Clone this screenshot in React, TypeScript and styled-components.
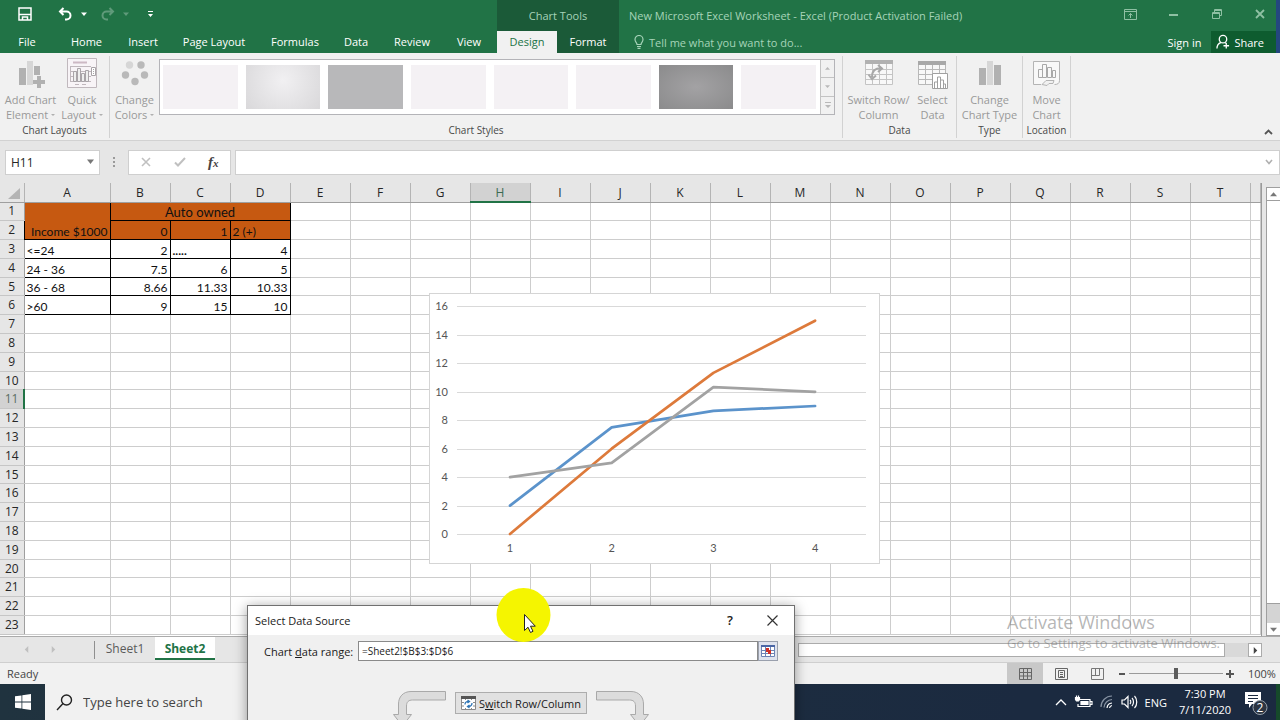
import React from "react";
import styled, { createGlobalStyle } from "styled-components";

const GlobalStyle = createGlobalStyle`
  * { box-sizing: border-box; }
  body { margin: 0; font-family: "Open Sans", "Noto Sans", sans-serif; font-size: 12px; color: #262626; }
  button { font: inherit; color: inherit; background: none; border: 0; padding: 0; }
  input { font: inherit; color: inherit; }
  svg { display: block; flex: none; }
`;

const Window = styled.div`
  position: relative;
  display: flex;
  flex-direction: column;
  height: 100vh;
  overflow: hidden;
  background: #e6e6e6;
`;

/* Title bar and tabs */
const TopRow = styled.header<{ $height: number }>`
  display: flex;
  align-items: stretch;
  flex: none;
  height: ${(p) => p.$height}px;
  background: #217346;
  border-right: 4px solid #24477f;
  color: #fff;
  font-size: 11px;
`;
const QuickAccess = styled.div`
  display: flex;
  align-items: center;
  width: 497px;
  padding: 0 0 3px 18px;
`;
const QuickButton = styled.button<{ $gap: number; $faded?: boolean }>`
  margin-right: ${(p) => p.$gap}px;
  opacity: ${(p) => (p.$faded ? 0.28 : 1)};
`;
const ToolsTitle = styled.div`
  width: 122px;
  line-height: 32px;
  text-align: center;
  background: #1b5a38;
  color: #a6d3b8;
`;
const DocTitle = styled.div`
  flex: 1;
  padding-left: 10px;
  line-height: 32px;
  color: #a6d3b8;
  white-space: nowrap;
`;
const WindowButtons = styled.div`
  display: flex;
  align-items: center;
  gap: 32px;
  padding: 0 11px 3px 0;
  color: #8fc0a3;
`;
const WindowButton = styled.button`
  display: flex;
  justify-content: center;
  width: 11px;
`;
const Tab = styled.button<{ $width: number; $kind?: "active" | "tool" }>`
  width: ${(p) => p.$width}px;
  line-height: 22px;
  white-space: nowrap;
  background: ${(p) => (p.$kind === "active" ? "#f1f1f1" : p.$kind === "tool" ? "#1b5a38" : "none")};
  color: ${(p) => (p.$kind === "active" ? "#217346" : "#fff")};
`;
const TellMe = styled.button`
  display: flex;
  align-items: center;
  gap: 5px;
  padding-left: 15px;
  color: #a6d3b8;
`;
const Spacer = styled.div`
  flex: 1;
`;
const AccountButton = styled.button<{ $dark?: boolean }>`
  display: flex;
  align-items: center;
  gap: 4px;
  padding: 0 ${(p) => (p.$dark ? 12 : 10)}px 0 ${(p) => (p.$dark ? 5 : 10)}px;
  white-space: nowrap;
  background: ${(p) => (p.$dark ? "#0e5c2f" : "none")};
`;

/* Ribbon */
const Ribbon = styled.section`
  display: flex;
  flex: none;
  height: 88px;
  padding: 3px 0 2px;
  background: #f1f1f1;
  border-bottom: 1px solid #d2d2d2;
`;
const Group = styled.div<{ $width: number }>`
  display: flex;
  flex-direction: column;
  flex: none;
  width: ${(p) => p.$width}px;
  border-right: 1px solid #d2d2d2;
`;
const GroupBody = styled.div<{ $start?: boolean }>`
  display: flex;
  justify-content: ${(p) => (p.$start ? "flex-start" : "center")};
  flex: 1;
`;
const GroupLabel = styled.div`
  line-height: 16px;
  text-align: center;
  font-size: 10px;
  color: #484848;
`;
const RibbonButton = styled.button<{ $width: number }>`
  display: flex;
  flex-direction: column;
  align-items: center;
  width: ${(p) => p.$width}px;
  padding-top: 1px;
  font-size: 11px;
  line-height: 15px;
  white-space: nowrap;
  color: #999;
  svg { margin-bottom: 3px; }
`;
const Gallery = styled.div`
  display: flex;
  width: 676px;
  height: 56px;
  margin: 3px 6px 0 0;
  background: #fff;
  border: 1px solid #b4b4b8;
`;
const Tiles = styled.div`
  display: flex;
  flex: 1;
  gap: 8px;
  padding: 5px 4px 5px 3px;
`;
const Tile = styled.button<{ $fill: string }>`
  flex: 1;
  background: ${(p) => p.$fill};
`;
const GalleryScroll = styled.div`
  display: flex;
  flex-direction: column;
  width: 14px;
  border-left: 1px solid #c3c3c3;
  background: #f1f1f1;
`;
const GalleryStep = styled.button`
  display: flex;
  align-items: center;
  justify-content: center;
  flex: 1;
  & + & { border-top: 1px solid #c3c3c3; }
`;
const Collapse = styled.button`
  align-self: flex-end;
  margin: 0 7px 3px auto;
`;

/* Formula bar */
const FormulaBar = styled.div`
  display: flex;
  align-items: center;
  flex: none;
  height: 42px;
  padding: 0 0 0 5px;
`;
const Box = styled.div<{ $width?: number; $gap?: number }>`
  display: flex;
  align-items: center;
  flex: ${(p) => (p.$width ? "none" : "1")};
  width: ${(p) => (p.$width ? p.$width + "px" : "auto")};
  height: 25px;
  margin-right: ${(p) => p.$gap ?? 0}px;
  background: #fff;
  border: 1px solid #cfcfcf;
`;
const BareInput = styled.input`
  flex: 1;
  min-width: 0;
  height: 100%;
  padding: 0 5px;
  border: 0;
  outline: 0;
  background: none;
`;
const Dots = styled.div`
  width: 28px;
  display: flex;
  justify-content: center;
`;
const FormulaButton = styled.button`
  display: flex;
  justify-content: center;
  width: 34px;
`;
const Fx = styled.span`
  font: italic bold 15px/20px "Liberation Serif", serif;
  color: #444;
  sub { font-size: 11px; line-height: 0; vertical-align: baseline; }
`;

/* Sheet */
const SheetArea = styled.main`
  position: relative;
  display: flex;
  flex: 1;
  min-height: 0;
`;
const TableFrame = styled.div`
  flex: 1;
  min-width: 0;
  height: 100%;
  padding-bottom: 1px;
  overflow: hidden;
  background: #fff;
  border-right: 1px solid #9a9a9a;
`;
const Grid = styled.table`
  width: 100%;
  height: 100%;
  table-layout: fixed;
  border-collapse: collapse;
  font-family: Lato, sans-serif;
  font-size: 12px;
  line-height: 15px;
  color: #111;
`;
const ColHead = styled.th<{ $on?: boolean }>`
  height: 19px;
  padding: 1px 0 0;
  font: 12px/15px "Open Sans", sans-serif;
  color: ${(p) => (p.$on ? "#3c6b52" : "#262626")};
  background: ${(p) => (p.$on ? "#d2d2d2" : "#e6e6e6")};
  border-right: 1px solid #b4b4b4;
  border-bottom: ${(p) => (p.$on ? "2px solid #217346" : "1px solid #9f9f9f")};
`;
const RowHead = styled.th<{ $on?: boolean }>`
  padding: 0;
  font: 12px/16px "Open Sans", sans-serif;
  color: ${(p) => (p.$on ? "#5b6d63" : "#262626")};
  background: ${(p) => (p.$on ? "#d2d2d2" : "#e6e6e6")};
  border-bottom: 1px solid #c6c6c6;
  border-right: ${(p) => (p.$on ? "2px solid #217346" : "1px solid #9f9f9f")};
`;
const Cell = styled.td`
  padding: 0;
  border: 1px solid #cdcdcd;
`;
const DataCell = styled.td<{ $align?: "left" | "right" | "center"; $head?: boolean }>`
  padding: 0 2px;
  font-size: ${(p) => (p.$align === "center" ? 13 : 12)}px;
  text-align: ${(p) => p.$align ?? "left"};
  vertical-align: bottom;
  white-space: nowrap;
  background: ${(p) => (p.$head ? "#c65911" : "#fff")};
  border: 1px solid #000;
`;
const ChartCard = styled.figure`
  position: absolute;
  left: 429px;
  top: 110px;
  margin: 0;
  background: #fff;
  border: 1px solid #d5d5d5;
`;
const VScroll = styled.div`
  display: flex;
  flex-direction: column;
  width: 14px;
  margin: 4px 0 0 4px;
  border: 1px solid #9f9f9f;
  border-right: 0;
  background: #d4d4d4;
`;
const VThumb = styled.div`
  flex: 1;
  margin-bottom: 19px;
  background: #fff;
  border-top: 1px solid #9f9f9f;
  border-bottom: 1px solid #9f9f9f;
`;
const ScrollButton = styled.button`
  display: flex;
  align-items: center;
  justify-content: center;
  height: 12px;
  background: #fff;
`;

/* Sheet tabs */
const SheetBar = styled.nav`
  display: flex;
  flex: none;
  height: 27px;
  padding-left: 23px;
  border-top: 1px solid #ababab;
  border-bottom: 1px solid #cfcfcf;
`;
const NavArrow = styled.button`
  display: flex;
  align-items: center;
  width: 27px;
`;
const SheetTab = styled.button<{ $active?: boolean }>`
  width: 60px;
  height: 23px;
  padding-top: 2px;
  font-size: 12px;
  font-weight: ${(p) => (p.$active ? 700 : 400)};
  color: ${(p) => (p.$active ? "#217346" : "#5a5a5a")};
  background: ${(p) => (p.$active ? "#fff" : "none")};
  border-bottom: 2px solid ${(p) => (p.$active ? "#217346" : "transparent")};
`;
const TabDivider = styled.div`
  width: 1px;
  height: 18px;
  margin: 4px 0 0 17px;
  background: #8f8f8f;
`;
const HScroll = styled.div`
  display: flex;
  align-items: stretch;
  width: 464px;
  height: 14px;
  margin: 6px 18px 0 auto;
  background: #d9d9d9;
`;
const HThumb = styled.div`
  width: 427px;
  margin-right: 23px;
  background: #fff;
  border: 1px solid #ababab;
`;
const HButton = styled.button`
  display: flex;
  align-items: center;
  justify-content: center;
  width: 14px;
  background: #fff;
  border: 1px solid #ababab;
`;

/* Status bar */
const StatusBar = styled.footer`
  display: flex;
  align-items: center;
  flex: none;
  height: 21px;
  padding: 0 5px 0 7px;
  font-size: 11px;
  color: #444;
  background: #f1f1f1;
`;
const ViewButton = styled.button<{ $on?: boolean }>`
  display: flex;
  align-items: center;
  justify-content: center;
  width: 36px;
  height: 21px;
  background: ${(p) => (p.$on ? "#c8c8c8" : "none")};
`;
const ZoomStep = styled.button`
  display: flex;
  justify-content: center;
  width: 14px;
`;
const ZoomSlider = styled.input`
  appearance: none;
  width: 94px;
  height: 12px;
  margin: 0;
  background: linear-gradient(#9a9a9a, #9a9a9a) center / 100% 1px no-repeat;
  &::-webkit-slider-thumb {
    appearance: none;
    width: 4px;
    height: 11px;
    background: #5c5c5c;
  }
`;
const ZoomValue = styled.button`
  margin-left: 11px;
  width: 27px;
  white-space: nowrap;
`;

/* Taskbar */
const Taskbar = styled.footer`
  display: flex;
  align-items: stretch;
  flex: none;
  height: 36px;
  color: #fff;
  background: linear-gradient(90deg, #20333f, #1b2a40 80%);
  border-right: 4px solid #164a2a;
`;
const Start = styled.button`
  display: flex;
  align-items: center;
  justify-content: center;
  width: 45px;
`;
const Search = styled.label`
  display: flex;
  align-items: center;
  width: 345px;
  padding-left: 11px;
  color: #333;
  background: #f1f1f1;
`;
const SearchInput = styled.input`
  flex: 1;
  min-width: 0;
  margin-left: 8px;
  border: 0;
  outline: 0;
  font-size: 13px;
  background: none;
  &::placeholder { color: #444; opacity: 1; }
`;
const Tray = styled.div`
  display: flex;
  align-items: center;
  margin-left: auto;
  padding-right: 8px;
  gap: 7px;
  font-size: 11px;
`;
const Clock = styled.time`
  width: 62px;
  text-align: center;
  line-height: 16px;
`;

/* Dialog */
const Dialog = styled.section`
  position: absolute;
  left: 247px;
  top: 605px;
  width: 548px;
  height: 160px;
  background: #f0f0f0;
  border: 1px solid #707070;
  box-shadow: 0 2px 12px rgba(0, 0, 0, 0.4);
  color: #1a1a1a;
  font-size: 11px;
`;
const DialogTitle = styled.header`
  display: flex;
  align-items: center;
  height: 29px;
  padding: 0 16px 1px 7px;
  background: #fff;
`;
const Help = styled.button`
  margin: 0 34px 0 auto;
  font-size: 13px;
  font-weight: 600;
`;
const RangeRow = styled.div`
  display: flex;
  align-items: center;
  margin: 6px 16px 0;
`;
const RangeLabel = styled.label`
  width: 94px;
  white-space: nowrap;
`;
const RangeInput = styled.input`
  flex: 1;
  min-width: 0;
  height: 20px;
  padding: 0 3px;
  border: 1px solid #8a8a8a;
  background: #fff;
  outline: 0;
  font-size: 10px;
`;
const RangePick = styled.button`
  display: flex;
  align-items: center;
  justify-content: center;
  width: 20px;
  height: 20px;
  background: #dfe3ee;
  border: 1px solid #9aa0ad;
`;
const SwitchRow = styled.div`
  display: flex;
  align-items: flex-start;
  justify-content: center;
  gap: 9px;
  margin-top: 30px;
`;
const SwitchButton = styled.button`
  display: flex;
  align-items: center;
  justify-content: center;
  gap: 3px;
  width: 132px;
  height: 22px;
  margin-top: 1px;
  white-space: nowrap;
  background: #e1e1e1;
  border: 1px solid #adadad;
`;

/* Overlays */
const Watermark = styled.div`
  position: absolute;
  left: 1007px;
  top: 610px;
  font-size: 13px;
  line-height: 18px;
  white-space: nowrap;
  color: rgba(120, 120, 120, 0.55);
  pointer-events: none;
`;
const WatermarkTitle = styled.div`
  font-size: 18px;
  line-height: 24px;
`;
const Pointer = styled.div`
  position: absolute;
  left: 496px;
  top: 588px;
  pointer-events: none;
`;

const Triangle = ({ dir = "down", color = "#777", size = 7 }: { dir?: string; color?: string; size?: number }) => {
  const d: Record<string, string> = {
    down: "M0 2h8L4 6.500z",
    up: "M0 6h8L4 1.500z",
    left: "M6 0v8L2 4z",
    right: "M2 0v8L6 4z",
  };
  return (
    <svg width={size} height={size} viewBox="0 0 8 8" fill={color}>
      <path d={d[dir]} />
    </svg>
  );
};

const Caret = styled.i`
  display: inline-block;
  margin: 0 0 2px 3px;
  border: 2px solid transparent;
  border-top-color: #b0b0b0;
  border-bottom: 0;
  vertical-align: middle;
`;

const AddElementIcon = () => (
  <svg width="30" height="32" viewBox="0 0 30 32">
    <path fill="#b1b1b1" d="M3 11h7v17H3z" />
    <path fill="#d6d6d6" d="M11 4h6v24h-6z" />
    <path fill="#b1b1b1" d="M18 9h6v9h-6zM21 19h4v4h4v4h-4v4h-4v-4h-4v-4h4z" />
  </svg>
);
const QuickLayoutIcon = () => (
  <svg width="30" height="32" viewBox="0 0 30 32" fill="none" stroke="#c0b8bd">
    <path fill="#f8f4f7" d="M.5 1.500h29v29H.5z" />
    <path stroke="#cdb9c4" strokeWidth="2" d="M6 5.500h14" />
    <path d="M3 9.500h21M3 14.500h21M3 19.500h21M3 24.500h21M3.500 9v16" />
    <path stroke="#a9a4a8" fill="#eee" d="M6.500 14.500h3v10h-3zM10.500 11.500h3v13h-3zM14.500 16.500h3v8h-3zM18.500 13.500h3v11h-3z" />
    <path stroke="#a9a4a8" fill="#fff" d="M24.500 10.500h4v8h-4z" />
    <path stroke="#a9a4a8" d="M26.500 12v1M26.500 14v1M26.500 16v1" />
    <path d="M8 27.500h4M15 27.500h4" />
  </svg>
);
const ColorsIcon = () => (
  <svg width="28" height="32" viewBox="0 0 28 32" fill="#b9b9b9">
    <circle cx="8.500" cy="8" r="3.700" fill="#d6d6d6" />
    <circle cx="20" cy="8" r="3.700" />
    <circle cx="4.500" cy="18" r="3.700" />
    <circle cx="23.500" cy="18" r="3.700" />
    <circle cx="14" cy="24.500" r="3.700" />
  </svg>
);
const SwitchIcon = () => (
  <svg width="28" height="32" viewBox="0 0 28 32" fill="none" stroke="#c4c4c4">
    <path fill="#f8f8f8" d="M.5 3.500h27v24H.5z" />
    <path d="M0 12.500h28M0 17.500h28M0 22.500h28M7.500 7v20M14.500 7v20M21.500 7v20" />
    <path fill="#b1b1b1" stroke="none" d="M0 3h28v4H0z" />
    <path stroke="#a8a8a8" strokeWidth="2" d="M7 20c0-7 4-9 9-9M13 8l4 3.500-4 3.500M3.500 17.500L7 22l4-3.500" />
  </svg>
);
const SelectDataIcon = () => (
  <svg width="30" height="32" viewBox="0 0 30 32" fill="none" stroke="#b8b8b8">
    <path fill="#f8f8f8" d="M.5 4.500h27v23H.5z" />
    <path d="M0 12.500h28M0 17.500h28M0 22.500h28M7.500 8v20M14.500 8v20M21.500 8v20" />
    <path fill="#a8a8a8" stroke="none" d="M0 4h28v4H0z" />
    <path fill="#fff" stroke="#a0a0a0" d="M14.500 16.500h15v15h-15z" />
    <path stroke="#a0a0a0" d="M16.500 31v-6h3v6M19.500 31V20h3v11M22.500 31v-8h3v8M25.500 31v-4h2v4" />
  </svg>
);
const ChartTypeIcon = () => (
  <svg width="24" height="32" viewBox="0 0 24 32" fill="#b1b1b1">
    <path d="M1 11h7v17H1zM16 8h7v20h-7z" />
    <path fill="#d6d6d6" d="M9 4h6v24H9z" />
  </svg>
);
const MoveChartIcon = () => (
  <svg width="28" height="32" viewBox="0 0 28 32" fill="none" stroke="#b4b4b4">
    <path d="M8 27.500H.5v-23h26v19c0 3-2 4-5 4" fill="#f8f8f8" />
    <path stroke="#a8a8a8" d="M5.500 12.500h4v8h-4zM9.500 7.500h4v13h-4zM14.500 10.500h4v10h-4zM19.500 13.500h3v7h-3z" />
    <path fill="#f1f1f1" d="M9 27.500l4-4h8l-1 3h-4l-2 2z" />
  </svg>
);

const tileFills = [
  "#f4f1f4",
  "radial-gradient(circle at 50% 35%, #f1f0f2, #d9d8da)",
  "#b8b8ba",
  "#f4f1f4",
  "#f4f1f4",
  "#f4f1f4",
  "radial-gradient(#a3a2a4, #8b8b8c)",
  "#f4f1f4",
];

const tabs: [string, number, ("active" | "tool")?][] = [
  ["File", 54],
  ["Home", 65],
  ["Insert", 48],
  ["Page Layout", 94],
  ["Formulas", 68],
  ["Data", 54],
  ["Review", 58],
  ["View", 56],
  ["Design", 60, "active"],
  ["Format", 62, "tool"],
];

const columns = "ABCDEFGHIJKLMNOPQRST".split("");
const records = [
  ["<=24", "2", ".....", "4"],
  ["24 - 36", "7.5", "6", "5"],
  ["36 - 68", "8.66", "11.33", "10.33"],
  [">60", "9", "15", "10"],
];

const Blank = ({ count }: { count: number }) => (
  <>
    {Array.from({ length: count }, (_, i) => (
      <Cell key={i} />
    ))}
  </>
);

const Sheet = () => (
  <Grid>
    <colgroup>
      <col style={{ width: 24 }} />
      <col style={{ width: 86 }} />
      {columns.slice(1).map((c) => (
        <col key={c} style={{ width: 60 }} />
      ))}
      <col />
    </colgroup>
    <thead>
      <tr>
        <ColHead aria-label="Select all">
          <svg width="22" height="14" viewBox="0 0 22 14">
            <path d="M20 2v11H8z" fill="#b4b4b4" />
          </svg>
        </ColHead>
        {columns.map((c) => (
          <ColHead key={c} $on={c === "H"}>
            {c}
          </ColHead>
        ))}
        <ColHead />
      </tr>
    </thead>
    <tbody>
      <tr>
        <RowHead>1</RowHead>
        <DataCell rowSpan={2} $head $align="right">
          Income $1000
        </DataCell>
        <DataCell colSpan={3} $head $align="center">
          Auto owned
        </DataCell>
        <Blank count={17} />
      </tr>
      <tr>
        <RowHead>2</RowHead>
        <DataCell $head $align="right">0</DataCell>
        <DataCell $head $align="right">1</DataCell>
        <DataCell $head>2 (+)</DataCell>
        <Blank count={17} />
      </tr>
      {records.map((r, i) => (
        <tr key={r[0]}>
          <RowHead>{i + 3}</RowHead>
          {r.map((v, j) => (
            <DataCell key={j} $align={j === 0 || v === "....." ? "left" : "right"}>
              {v === "....." ? <b>{v}</b> : v}
            </DataCell>
          ))}
          <Blank count={17} />
        </tr>
      ))}
      {Array.from({ length: 17 }, (_, i) => i + 7).map((n) => (
        <tr key={n}>
          <RowHead $on={n === 11}>{n}</RowHead>
          <Blank count={21} />
        </tr>
      ))}
    </tbody>
  </Grid>
);

const series = [
  { color: "#5b93cb", values: [2, 7.5, 8.66, 9] },
  { color: "#dd7a3b", values: [0, 6, 11.33, 15] },
  { color: "#a2a2a2", values: [4, 5, 10.33, 10] },
];
const xAt = (i: number) => 80 + i * 101.7;
const yAt = (v: number) => 240 - v * 14.22;

const LineChart = () => (
  <svg width="449" height="269" viewBox="0 0 449 269" fontFamily="Lato, sans-serif" fontSize="11" fill="#555">
    {[0, 2, 4, 6, 8, 10, 12, 14, 16].map((v) => (
      <g key={v}>
        <path d={`M27 ${Math.round(yAt(v)) + 0.5}H436`} stroke="#d9d9d9" />
        <text x="18" y={yAt(v) + 4} textAnchor="end">
          {v}
        </text>
      </g>
    ))}
    {[1, 2, 3, 4].map((n, i) => (
      <text key={n} x={xAt(i)} y="258" textAnchor="middle">
        {n}
      </text>
    ))}
    {series.map((s) => (
      <polyline
        key={s.color}
        points={s.values.map((v, i) => `${xAt(i)},${yAt(v)}`).join(" ")}
        fill="none"
        stroke={s.color}
        strokeWidth="2.700"
        strokeLinecap="round"
        strokeLinejoin="round"
      />
    ))}
  </svg>
);

const SwapArrow = ({ flip }: { flip?: boolean }) => (
  <svg width="53" height="36" viewBox="0 0 53 36">
    <path
      transform={flip ? "translate(53 0) scale(-1 1)" : undefined}
      d="M52.500.5H18C10 .5 5.500 6 5.500 13v10.500H.5L9.500 35l9-11.500h-5V15c0-4 2-6 6-6h33z"
      fill="#dcdcdc"
      stroke="#a9a9a9"
    />
  </svg>
);

export default function App() {
  return (
    <Window>
      <GlobalStyle />
      <TopRow $height={31}>
        <QuickAccess>
          <QuickButton $gap={26} aria-label="Save">
            <svg width="14" height="14" viewBox="0 0 14 14" fill="none" stroke="#fff" strokeWidth="1.500">
              <path d="M1 1h12v12H1zM1 7.500h12" />
              <path d="M4.500 13v-3h5v3" />
            </svg>
          </QuickButton>
          <QuickButton $gap={8} aria-label="Undo">
            <svg width="15" height="14" viewBox="0 0 15 14" fill="none" stroke="#fff" strokeWidth="2">
              <path d="M5.500 1L2 4.500 5.500 8M2 4.500h6.500a4 4 0 0 1 0 8H7" />
            </svg>
          </QuickButton>
          <QuickButton $gap={13} aria-label="Undo options">
            <Triangle size={6} color="#fff" />
          </QuickButton>
          <QuickButton $gap={8} $faded aria-label="Redo">
            <svg width="15" height="14" viewBox="0 0 15 14" fill="none" stroke="#fff" strokeWidth="2">
              <path d="M9.500 1L13 4.500 9.500 8M13 4.500H6.500a4 4 0 0 0 0 8H8" />
            </svg>
          </QuickButton>
          <QuickButton $gap={18} $faded aria-label="Redo options">
            <Triangle size={6} color="#fff" />
          </QuickButton>
          <QuickButton $gap={0} aria-label="Customize toolbar">
            <svg width="7" height="8" viewBox="0 0 7 8" fill="#fff">
              <path d="M1 1h5v1H1zM1 4h5L3.500 7z" />
            </svg>
          </QuickButton>
        </QuickAccess>
        <ToolsTitle>Chart Tools</ToolsTitle>
        <DocTitle>New Microsoft Excel Worksheet - Excel (Product Activation Failed)</DocTitle>
        <WindowButtons>
          <WindowButton aria-label="Ribbon display options">
            <svg width="13" height="11" viewBox="0 0 13 11" fill="none" stroke="currentColor">
              <path d="M.5.5h12v10H.5zM.5 2.500h12M6.500 9V4.500M4.500 6.500l2-2 2 2" />
            </svg>
          </WindowButton>
          <WindowButton aria-label="Minimize">
            <svg width="9" height="10" viewBox="0 0 9 10" fill="currentColor">
              <path d="M0 5h9v2H0z" />
            </svg>
          </WindowButton>
          <WindowButton aria-label="Restore">
            <svg width="10" height="10" viewBox="0 0 10 10" fill="none" stroke="currentColor">
              <path d="M.5 3.500h7v6h-7zM.5 4.500h7M2.500 3V.5h7v6H8M2.500 1.500h7" />
            </svg>
          </WindowButton>
          <WindowButton aria-label="Close">
            <svg width="10" height="10" viewBox="0 0 10 10" stroke="currentColor" strokeWidth="1.800">
              <path d="M1 1l8 8M9 1L1 9" />
            </svg>
          </WindowButton>
        </WindowButtons>
      </TopRow>
      <TopRow $height={22}>
        {tabs.map(([name, width, kind]) => (
          <Tab key={name} $width={width} $kind={kind}>
            {name}
          </Tab>
        ))}
        <TellMe>
          <svg width="10" height="14" viewBox="0 0 10 14" fill="none" stroke="currentColor" strokeWidth="1.200">
            <path d="M3 9.500C3 7.500 1 7 1 4.500a4 4 0 0 1 8 0C9 7 7 7.500 7 9.500zM3 11.500h4M3.500 13.300h3" />
          </svg>
          Tell me what you want to do...
        </TellMe>
        <Spacer />
        <AccountButton>Sign in</AccountButton>
        <AccountButton $dark>
          <svg width="14" height="16" viewBox="0 0 15 16" fill="none" stroke="#fff" strokeWidth="1.400">
            <circle cx="7.500" cy="5" r="4" />
            <path d="M1 15c0-4 2-5.500 4.500-6.500M9.500 8.500l1.500 1M11 9v6M8 12h6" />
          </svg>
          Share
        </AccountButton>
      </TopRow>

      <Ribbon>
        <Group $width={110}>
          <GroupBody $start>
            <RibbonButton $width={61}>
              <AddElementIcon />
              Add Chart
              <span>Element<Caret /></span>
            </RibbonButton>
            <RibbonButton $width={42}>
              <QuickLayoutIcon />
              Quick
              <span>Layout<Caret /></span>
            </RibbonButton>
          </GroupBody>
          <GroupLabel>Chart Layouts</GroupLabel>
        </Group>
        <Group $width={733}>
          <GroupBody $start>
            <RibbonButton $width={49}>
              <ColorsIcon />
              Change
              <span>Colors<Caret /></span>
            </RibbonButton>
            <Gallery>
              <Tiles>
                {tileFills.map((fill, i) => (
                  <Tile key={i} $fill={fill} aria-label={`Style ${i + 1}`} />
                ))}
              </Tiles>
              <GalleryScroll>
                <GalleryStep aria-label="Previous styles">
                  <Triangle size={5} dir="up" color="#b8b8b8" />
                </GalleryStep>
                <GalleryStep aria-label="Next styles">
                  <Triangle size={5} color="#b8b8b8" />
                </GalleryStep>
                <GalleryStep aria-label="More styles">
                  <svg width="6" height="6" viewBox="0 0 6 6" fill="#b8b8b8">
                    <path d="M0 0h6v1H0zM0 3h6L3 6z" />
                  </svg>
                </GalleryStep>
              </GalleryScroll>
            </Gallery>
          </GroupBody>
          <GroupLabel>Chart Styles</GroupLabel>
        </Group>
        <Group $width={114}>
          <GroupBody>
            <RibbonButton $width={66}>
              <SwitchIcon />
              Switch Row/
              <span>Column</span>
            </RibbonButton>
            <RibbonButton $width={42}>
              <SelectDataIcon />
              Select
              <span>Data</span>
            </RibbonButton>
          </GroupBody>
          <GroupLabel>Data</GroupLabel>
        </Group>
        <Group $width={66}>
          <GroupBody>
            <RibbonButton $width={60}>
              <ChartTypeIcon />
              Change
              <span>Chart Type</span>
            </RibbonButton>
          </GroupBody>
          <GroupLabel>Type</GroupLabel>
        </Group>
        <Group $width={48}>
          <GroupBody>
            <RibbonButton $width={44}>
              <MoveChartIcon />
              Move
              <span>Chart</span>
            </RibbonButton>
          </GroupBody>
          <GroupLabel>Location</GroupLabel>
        </Group>
        <Collapse aria-label="Collapse the ribbon">
          <svg width="9" height="6" viewBox="0 0 9 6" fill="none" stroke="#555" strokeWidth="1.800">
            <path d="M1 5l3.500-3.500L8 5" />
          </svg>
        </Collapse>
      </Ribbon>

      <FormulaBar>
        <Box $width={95}>
          <BareInput aria-label="Name box" defaultValue="H11" />
          <svg width="15" height="8" viewBox="0 0 15 8" fill="#777">
            <path d="M3 1.500h7L6.500 6z" />
          </svg>
        </Box>
        <Dots>
          <svg width="2" height="10" viewBox="0 0 2 10" fill="#9a9a9a">
            <path d="M0 0h2v2H0zM0 4h2v2H0zM0 8h2v2H0z" />
          </svg>
        </Dots>
        <Box $width={103} $gap={4}>
          <FormulaButton aria-label="Cancel">
            <svg width="10" height="10" viewBox="0 0 10 10" stroke="#c0c0c0" strokeWidth="1.600">
              <path d="M1 1l8 8M9 1L1 9" />
            </svg>
          </FormulaButton>
          <FormulaButton aria-label="Enter">
            <svg width="12" height="10" viewBox="0 0 12 10" fill="none" stroke="#c0c0c0" strokeWidth="2">
              <path d="M1 5.500L4 8.500 11 1" />
            </svg>
          </FormulaButton>
          <FormulaButton aria-label="Insert function">
            <Fx>
              f<sub>x</sub>
            </Fx>
          </FormulaButton>
        </Box>
        <Box>
          <BareInput aria-label="Formula" />
          <svg width="14" height="6" viewBox="0 0 14 6" fill="none" stroke="#b0b0b0" strokeWidth="1.600">
            <path d="M1 1l3 3.500L7 1" />
          </svg>
        </Box>
      </FormulaBar>

      <SheetArea>
        <TableFrame>
          <Sheet />
        </TableFrame>
        <VScroll>
          <ScrollButton aria-label="Scroll up">
            <Triangle dir="up" />
          </ScrollButton>
          <VThumb />
          <ScrollButton aria-label="Scroll down">
            <Triangle />
          </ScrollButton>
        </VScroll>
        <ChartCard aria-label="Line chart">
          <LineChart />
        </ChartCard>
      </SheetArea>

      <SheetBar>
        <NavArrow aria-label="Previous sheet">
          <Triangle dir="left" color="#c0c0c0" />
        </NavArrow>
        <NavArrow aria-label="Next sheet">
          <Triangle dir="right" color="#c0c0c0" />
        </NavArrow>
        <TabDivider />
        <SheetTab>Sheet1</SheetTab>
        <SheetTab $active>Sheet2</SheetTab>
        <HScroll>
          <HThumb />
          <HButton aria-label="Scroll right">
            <Triangle dir="right" color="#444" />
          </HButton>
        </HScroll>
      </SheetBar>

      <StatusBar>
        Ready
        <Spacer />
        <ViewButton $on aria-label="Normal view">
          <svg width="13" height="12" viewBox="0 0 13 12" fill="none" stroke="#666">
            <path d="M.5.5h12v11H.5zM.5 4.500h12M.5 8h12M4.500.5v11M8.500.5v11" />
          </svg>
        </ViewButton>
        <ViewButton aria-label="Page layout view">
          <svg width="13" height="12" viewBox="0 0 13 12" fill="none" stroke="#666">
            <path d="M.5.5h12v11H.5zM3.500 2.500h6v7h-6zM5 4.500h3M5 6.500h3M5 8.500h3" />
          </svg>
        </ViewButton>
        <ViewButton aria-label="Page break view">
          <svg width="13" height="12" viewBox="0 0 13 12" fill="none" stroke="#777">
            <path d="M.5.5h12v11H.5zM.5 7.500h8V.5M4.500.5v7" />
          </svg>
        </ViewButton>
        <ZoomStep aria-label="Zoom out">
          <svg width="8" height="8" viewBox="0 0 8 8" fill="#555">
            <path d="M1 3h6v2H1z" />
          </svg>
        </ZoomStep>
        <ZoomSlider type="range" aria-label="Zoom" defaultValue={50} />
        <ZoomStep aria-label="Zoom in">
          <svg width="8" height="8" viewBox="0 0 8 8" fill="#555">
            <path d="M0 3h3V0h2v3h3v2H5v3H3V5H0z" />
          </svg>
        </ZoomStep>
        <ZoomValue>100%</ZoomValue>
      </StatusBar>

      <Taskbar>
        <Start aria-label="Start">
          <svg width="16" height="16" viewBox="0 0 16 16" fill="#fff">
            <path d="M0 2.300l6.500-.9v6.100H0zM7.300 1.300L16 0v7.500H7.300zM0 8.400h6.500v6.200L0 13.700zM7.300 8.400H16V16l-8.700-1.300z" />
          </svg>
        </Start>
        <Search>
          <svg width="17" height="17" viewBox="0 0 17 17" fill="none" stroke="#222" strokeWidth="1.400">
            <circle cx="10.500" cy="6" r="5" />
            <path d="M7 9.500L1 16" />
          </svg>
          <SearchInput type="search" aria-label="Search" placeholder="Type here to search" />
        </Search>
        <Tray>
          <svg width="12" height="8" viewBox="0 0 12 8" fill="none" stroke="#fff" strokeWidth="1.300">
            <path d="M1 7l5-5 5 5" />
          </svg>
          <svg width="19" height="14" viewBox="0 0 19 14" fill="none" stroke="#fff" strokeWidth="1.200">
            <path d="M6 4.500h10v7H4V9M16 6.500h2v3h-2" />
            <path fill="#fff" d="M7 6.500h7v3H7zM1.500 2.500h4v2l-1 1.500h-2l-1-1.500zM2.500.5v2M4.500.5v2" />
          </svg>
          <svg width="14" height="14" viewBox="0 0 14 14" fill="none" stroke="#8793a3" strokeWidth="1.200">
            <path d="M1 12A11 11 0 0 1 12 1M4 12.500A8.500 8.500 0 0 1 12 4.500" />
            <path stroke="#fff" d="M7 13a5.500 5.500 0 0 1 5-5M9.500 13a3 3 0 0 1 2.500-2.500" />
          </svg>
          <svg width="17" height="14" viewBox="0 0 17 14" fill="none" stroke="#fff" strokeWidth="1.200">
            <path d="M1 5h2.500l3.500-3.500v11L3.500 9H1zM9 5c1 1 1 3 0 4M11 3c2 2 2 6 0 8M13.500 1c3 3 3 9 0 12" />
          </svg>
          <span>ENG</span>
          <Clock>
            7:30 PM
            <br />
            7/11/2020
          </Clock>
          <svg width="25" height="28" viewBox="0 0 25 28">
            <path fill="#fff" d="M2 4h16v12H9l-3 4v-4H2z" />
            <path stroke="#1b2a40" d="M5 7.500h10M5 10.500h10M5 13.500h5" />
            <circle cx="17" cy="19.500" r="7" fill="#2c3542" stroke="#9aa3ad" />
            <text x="17" y="24" fill="#fff" fontSize="12" textAnchor="middle">2</text>
          </svg>
        </Tray>
      </Taskbar>

      <Watermark>
        <WatermarkTitle>Activate Windows</WatermarkTitle>
        Go to Settings to activate Windows.
      </Watermark>

      <Dialog role="dialog" aria-label="Select Data Source">
        <DialogTitle>
          Select Data Source
          <Help aria-label="Help">?</Help>
          <button aria-label="Close">
            <svg width="11" height="11" viewBox="0 0 11 11" stroke="#333" strokeWidth="1.200">
              <path d="M.5.5l10 10M10.500.5l-10 10" />
            </svg>
          </button>
        </DialogTitle>
        <RangeRow>
          <RangeLabel htmlFor="range">
            Chart <u>d</u>ata range:
          </RangeLabel>
          <RangeInput id="range" defaultValue="=Sheet2!$B$3:$D$6" />
          <RangePick aria-label="Collapse dialog">
            <svg width="14" height="12" viewBox="0 0 14 12">
              <path fill="#fff" stroke="#6d83b5" d="M.5.5h13v11H.5z" />
              <path stroke="#6d83b5" d="M0 5.500h14M0 8.500h14M4.500 2v10M9.500 2v10" />
              <path fill="#4a66a5" d="M0 0h14v2H0z" />
              <path fill="#d03028" d="M5 3h3v2h2v4H7V7H5z" />
            </svg>
          </RangePick>
        </RangeRow>
        <SwitchRow>
          <SwapArrow />
          <SwitchButton>
            <svg width="15" height="14" viewBox="0 0 15 14" fill="none">
              <path fill="#fff" stroke="#8a8a8a" d="M.5.5h14v13H.5zM.5 6.500h14M.5 10h14M4.500 3v10M10.500 3v10" />
              <path fill="#555" d="M0 0h15v3H0z" />
              <path fill="#fff" d="M3 4h9v8H3z" />
              <path stroke="#2f75b5" strokeWidth="1.300" d="M4 8.500c0-2.500 1.500-3 4-3M6.500 4l2 1.500-2 1.500M11 7c0 3-1.500 3.500-4 3.500M8.500 9l-2 1.500 2 1.500" />
            </svg>
            <span>
              S<u>w</u>itch Row/Column
            </span>
          </SwitchButton>
          <SwapArrow flip />
        </SwitchRow>
      </Dialog>

      <Pointer>
        <svg width="56" height="56" viewBox="0 0 56 56">
          <circle cx="27.500" cy="27" r="27" fill="#f5f500" />
          <path d="M28.500 26.500v16l3.500-3.300 2.500 5.300 2.500-1.200-2.500-5.100h4.800z" fill="#fff" stroke="#222" />
        </svg>
      </Pointer>
    </Window>
  );
}
